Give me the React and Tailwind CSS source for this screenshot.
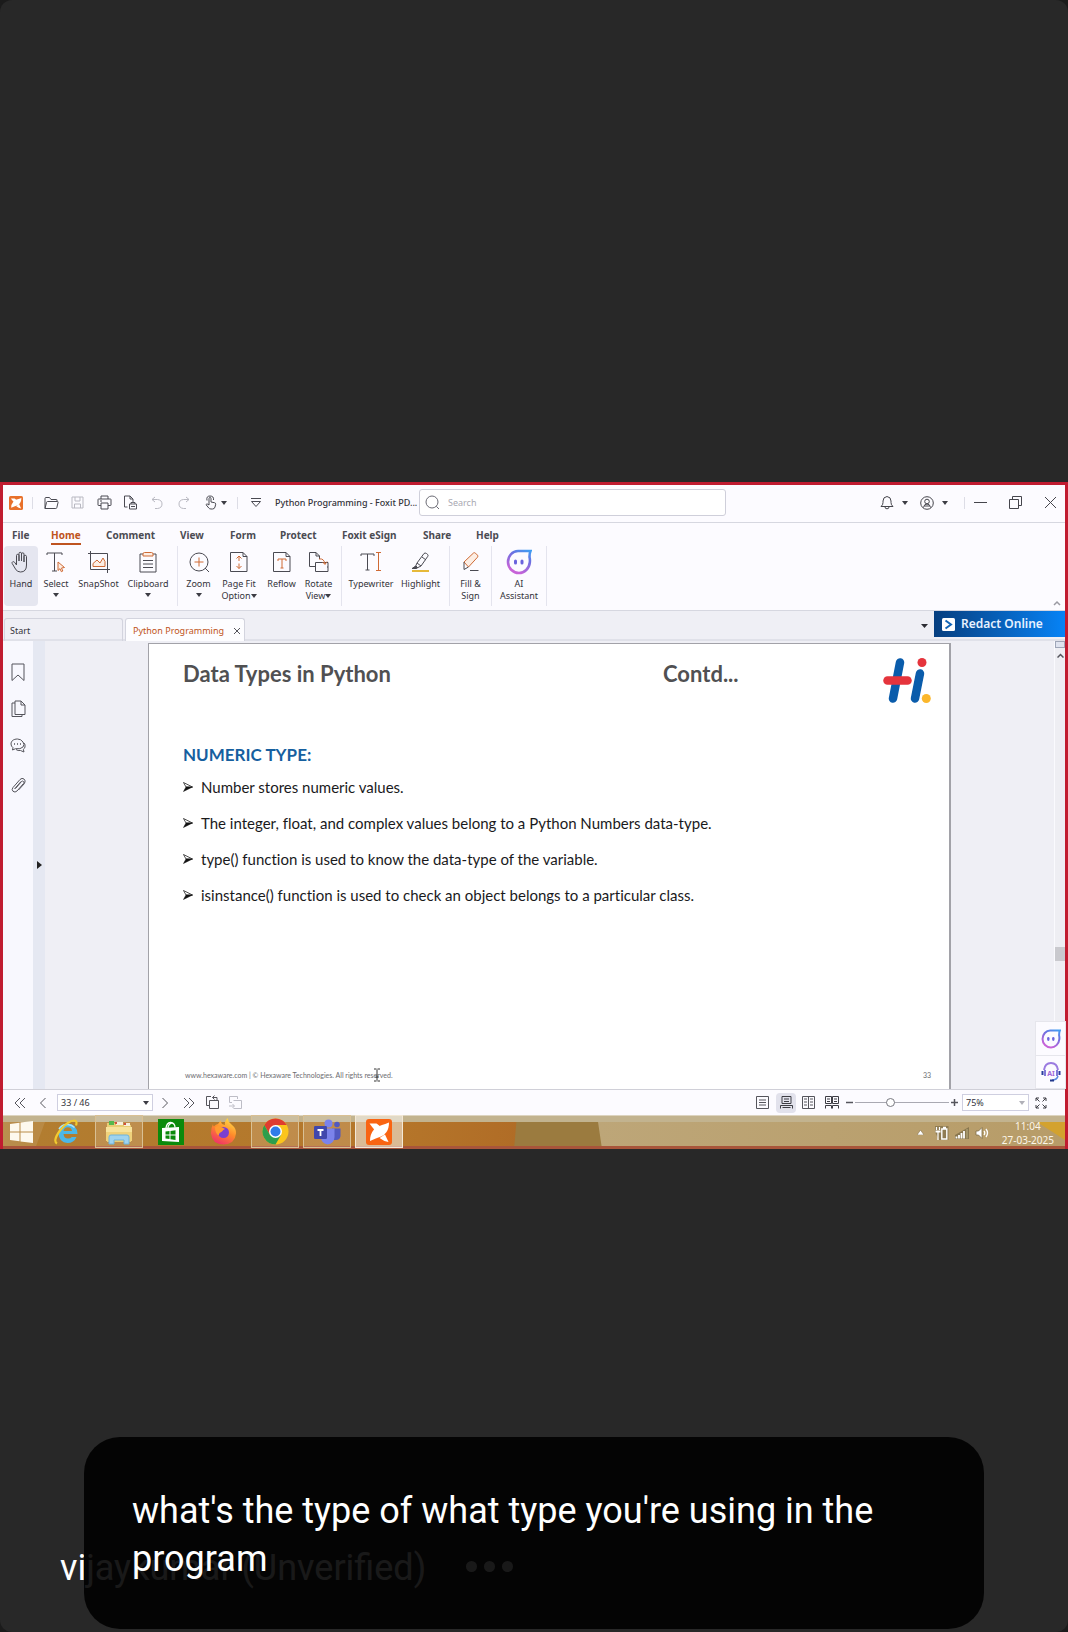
import React from "react";

function Svg({ w = 16, h, vb, className = "", children, sw = 1 }) {
  const hh = h || w;
  return (
    <svg
      width={w}
      height={hh}
      viewBox={vb || `0 0 ${w} ${hh}`}
      fill="none"
      stroke="currentColor"
      strokeWidth={sw}
      className={`shrink-0 ${className}`}
      aria-hidden="true"
    >
      {children}
    </svg>
  );
}

function Caret({ className = "text-[#3c3c44]" }) {
  return (
    <Svg w={6} h={4} className={className}>
      <path d="M0 0h6L3 4z" fill="currentColor" stroke="none" />
    </Svg>
  );
}

function FoxMark({ size, bg, fg }) {
  return (
    <Svg w={size} vb="0 0 26 26">
      <rect width="26" height="26" rx="3" fill={bg} stroke="none" />
      <path
        d="M4 22q0-7 4-11.500Q11 7 16 6q3-.8 7-2.500 0 6-2.500 9.500-2 3-5.500 4.500Q10 19 4 22zM3.500 4.500h7l3 2.300-5.300 3.600Q6 8 3.500 4.500zM13.500 19l5.500-3.500 3.500 7.500Q18 22.500 13.500 19z"
        fill={fg}
        stroke="none"
      />
    </Svg>
  );
}

function AiFace({ size }) {
  return (
    <Svg w={size} vb="0 0 26 26">
      <defs>
        <linearGradient id={`ai${size}`} x1="1" y1="0" x2="0.5" y2="1">
          <stop offset="0" stopColor="#3f9df2" />
          <stop offset="0.4" stopColor="#6d6fe0" />
          <stop offset="1" stopColor="#c763d8" />
        </linearGradient>
      </defs>
      <path
        d="M12 2h12.500c-1 2-1 3.500-1 6 .5 2 .5 4 .3 5.500C23.200 19.500 18.500 24 13 24 7 24 2 19 2 13S6.500 2 12 2z"
        stroke={`url(#ai${size})`}
        strokeWidth="2.600"
      />
      <rect x="8" y="10.500" width="3" height="5" rx="1.500" fill="#6a63dd" stroke="none" />
      <rect x="14.500" y="10.500" width="3" height="5" rx="1.500" fill="#6a63dd" stroke="none" />
    </Svg>
  );
}

const quick = [
  {
    label: "Open",
    cls: "w-[26px] text-[#4a4a52]",
    icon: (
      <Svg w={16} h={14}>
        <path d="M2 12.500V2.500q0-1 1-1h3.500L8 3.500h5.500q.5 0 .5.5v1.500M2 12.500l1.500-6q.2-1 1-1h10q.8 0 .6.8l-1.300 5.400q-.2.8-1 .8z" />
      </Svg>
    ),
  },
  {
    label: "Save",
    cls: "w-[27px] text-[#b9b9c2]",
    icon: (
      <Svg w={13}>
        <path d="M1 1h11v11H1zM4 1v4h5V1M3.500 12V8h6v4" />
      </Svg>
    ),
  },
  {
    label: "Print",
    cls: "w-[26px] text-[#4a4a52]",
    icon: (
      <Svg w={15}>
        <path d="M4 4V1h7v3M4 10.500H1.500q-.5 0-.5-.5V4.500q0-.5.5-.5h12q.5 0 .5.500V10q0 .5-.5.500H11M4 8h7v6H4zM3 6h2" />
      </Svg>
    ),
  },
  {
    label: "Print preview",
    cls: "w-[27px] text-[#4a4a52]",
    icon: (
      <Svg w={15}>
        <path d="M4.500 12H1.500V1H7l3 3v3M7 1v3h3M6.500 9h7v5h-7zM8 9V7.500h4V9M8 11.500h4" />
      </Svg>
    ),
  },
  {
    label: "Undo",
    cls: "w-[26px] text-[#b9b9c2]",
    icon: (
      <Svg w={12} h={14}>
        <path d="M4 1L1 3.500 4 6M1 3.500h5.500q4.500.5 4.500 4.500 0 4-4.500 4.500H4" />
      </Svg>
    ),
  },
  {
    label: "Redo",
    cls: "w-[27px] text-[#b9b9c2]",
    icon: (
      <Svg w={12} h={14}>
        <path d="M8 1l3 2.500L8 6M11 3.500H5.500Q1 4 1 8q0 4 4.500 4.500H8" />
      </Svg>
    ),
  },
];

function TitleBar() {
  return (
    <header className="flex h-[38px] items-center border-b border-[#d6d7e0] bg-[#fcfbff] pb-0.5 pl-1.5">
      <FoxMark size={14} bg="#e8702a" fg="#fff" />
      <span className="ml-[9px] mr-[5px] h-3 w-px bg-[#dddde6]" />
      {quick.map((q) => (
        <button key={q.label} aria-label={q.label} className={`flex h-6 items-center justify-center ${q.cls}`}>
          {q.icon}
        </button>
      ))}
      <button aria-label="Touch mode" className="flex h-6 w-9 items-center gap-1 pl-[7px] text-[#4a4a52]">
        <Svg w={13} h={15}>
          <path d="M5 9V3.500q0-1 1-1t1 1V7l3.500.7q1.300.3 1.200 1.500L11 12q-.5 2-2.500 2H7q-1.500 0-2.200-1L2 9.700q.7-1.200 1.800-.5L5 10zM3 5.500Q2 1 6 1t3.500 4" />
        </Svg>
        <Caret />
      </button>
      <span className="ml-1 mr-3 h-3 w-px bg-[#dddde6]" />
      <button aria-label="Customize toolbar" className="text-[#4a4a52]">
        <Svg w={12} h={10}>
          <path d="M1 .5h10M1.500 3.500h9L6 8.500z" />
        </Svg>
      </button>
      <span className="ml-[13px] w-36 whitespace-nowrap text-[9px] font-medium text-[#33333a]">Python Programming - Foxit PD...</span>
      <label className="flex h-[27px] w-[307px] items-center gap-2 rounded-[3px] border border-[#cfcfda] bg-white px-[5px] text-[#6c6c75]">
        <Svg w={15}>
          <circle cx="7" cy="7" r="6" />
          <path d="M11.300 11.300l2.700 2.700" />
        </Svg>
        <input aria-label="Search" placeholder="Search" className="min-w-0 flex-1 bg-transparent text-[9px] outline-none placeholder:text-[#a9a9b2]" />
      </label>
      <div className="ml-auto flex items-center text-[#45454c]">
        <button aria-label="Notifications" className="flex w-10 items-center gap-2">
          <Svg w={14} h={15}>
            <path d="M1 11.500h12q-2-1.500-2-4V6q0-4-4-4.500Q3 2 3 6v1.500q0 2.500-2 4zM5 12q0 1.800 2 1.800T9 12" />
          </Svg>
          <Caret />
        </button>
        <button aria-label="Account" className="flex w-11 items-center gap-2">
          <Svg w={14}>
            <circle cx="7" cy="7" r="6.300" />
            <circle cx="7" cy="5.500" r="2.300" />
            <path d="M3.500 11.500Q4 8 7 8t3.500 3.500M4.500 10h5" />
          </Svg>
          <Caret />
        </button>
        <span className="mr-2 h-3 w-px bg-[#dddde6]" />
        <button aria-label="Minimize" className="w-[35px]">
          <Svg w={14}>
            <path d="M1 6.500h13" />
          </Svg>
        </button>
        <button aria-label="Restore" className="w-[36px]">
          <Svg w={15}>
            <path d="M1.500 4.500h9v9h-9zM4.500 4.500v-3h9v9h-3" />
          </Svg>
        </button>
        <button aria-label="Close" className="w-[21px]">
          <Svg w={13}>
            <path d="M1 1l11 11M12 1L1 12" />
          </Svg>
        </button>
      </div>
    </header>
  );
}

const menus = [
  ["File", "w-[39px]"],
  ["Home", "w-[55px]"],
  ["Comment", "w-[74px]"],
  ["View", "w-[50px]"],
  ["Form", "w-[50px]"],
  ["Protect", "w-[62px]"],
  ["Foxit eSign", "w-[81px]"],
  ["Share", "w-[53px]"],
  ["Help", "w-[40px]"],
];

const O = "#cf6a35";

const groups = [
  [
    {
      l1: "Hand",
      w: "w-[34px] bg-[#e5e6f0] rounded-sm",
      icon: (
        <path d="M6.500 14V4.500q0-1.200 1.200-1.200T9 4.500V10V2.500q0-1.200 1.200-1.200t1.300 1.200V10V3q0-1.200 1.200-1.200T14 3v8V5.500q0-1.200 1.200-1.200t1.300 1.200V14q0 7-6 7-3.500 0-5-3L2.200 12.500q-.5-1.200.5-1.700t2 .6L6.500 14" />
      ),
    },
    {
      l1: "Select",
      w: "w-[36px]",
      caret: true,
      icon: (
        <>
          <path d="M2 4V2h15v2M9.500 2v18M7 20h5" />
          <path d="M13 11l6.500 5.500-3 .5 1.300 3-1.500.7-1.300-3-2 1.800z" stroke={O} fill="#fdeee4" />
        </>
      ),
    },
    {
      l1: "SnapShot",
      w: "w-[49px]",
      icon: (
        <>
          <path d="M0 2.500h19.500V22M2.500 0v18.500H22" />
          <path d="M5 15.500v-3l4-3.500 3 3 3-5 2 3.500v5z" stroke={O} fill="#fdeee4" />
        </>
      ),
    },
    {
      l1: "Clipboard",
      w: "w-[50px]",
      caret: true,
      icon: (
        <>
          <path d="M6 3H3v18h16V3h-3M6 9.500h10M6 13h10M6 16.500h10" />
          <path d="M6 5V3q0-1.500 1.500-1.500h7Q16 1.500 16 3v2z" stroke={O} fill="#fdeee4" />
        </>
      ),
    },
  ],
  [
    {
      l1: "Zoom",
      w: "w-[33px]",
      caret: true,
      icon: (
        <>
          <path d="M17 17l4 4" />
          <circle cx="11" cy="11" r="9" />
          <path d="M11 6.500v9M6.500 11h9" stroke={O} />
        </>
      ),
    },
    {
      l1: "Page Fit",
      l2: "Option",
      w: "w-[48px]",
      icon: (
        <>
          <path d="M2.500 1.500H15l4 4v15H2.500zM15 1.500v4h4" />
          <path d="M11 5v5M11 12.500v5M8.500 7.500L11 5l2.500 2.500M8.500 15l2.500 2.500 2.500-2.500" stroke={O} />
        </>
      ),
    },
    {
      l1: "Reflow",
      w: "w-[37px]",
      icon: (
        <>
          <path d="M2.500 1.500H15l4 4v15H2.500zM15 1.500v4h4" />
          <path d="M7 10V8h8v2M11 8v9M9.500 17h3" stroke={O} />
        </>
      ),
    },
    {
      l1: "Rotate",
      l2: "View",
      w: "w-[37px]",
      icon: (
        <>
          <path d="M7 15.500H1.500v-14H8l3.500 3.500v3M8 1.500V5h3.500M7.500 20.500v-9H20v9zM20 16h-1" />
          <path d="M11 8q5-1 6 5M14.500 11l2.500 2.500 2-3" stroke={O} />
        </>
      ),
    },
  ],
  [
    {
      l1: "Typewriter",
      w: "w-[50px]",
      icon: (
        <>
          <path d="M1 5V3h13v2M7.500 3v16M5.500 19h4" />
          <path d="M16 1.500h5M18.500 1.500v18M16 19.500h5" stroke={O} />
        </>
      ),
    },
    {
      l1: "Highlight",
      w: "w-[49px]",
      icon: (
        <>
          <path d="M7 12l7-9.500q1-1 2.500 0l1 .8q1 1 .3 2L11 15zM7 12l-1.500 3.500L2 17.500h4l2-1L11 15M12 6l4 3" />
          <path d="M3 17l3-2 1.500 1.500-2 1z" fill="#4a4a52" />
          <path d="M2 20h17" stroke="#e6b93a" strokeWidth="2" />
        </>
      ),
    },
  ],
  [
    {
      l1: "Fill &",
      l2: "Sign",
      plain: true,
      w: "w-[33px]",
      icon: (
        <>
          <path d="M4 11L13.500 2q1-.7 2 .2l2 2q.8 1 0 2L8.500 16z" stroke={O} fill="#fdeee4" />
          <path d="M4 11v7.500L8.500 16M10 19.500h8.500" />
        </>
      ),
    },
  ],
  [{ l1: "AI", l2: "Assistant", plain: true, w: "w-[46px]", ai: true }],
];

function Tool({ t }) {
  return (
    <button className={`flex h-[60px] flex-col items-center pt-[3px] text-[9px] leading-3 text-[#33333a] ${t.w}`}>
      <span className="flex h-[26px] items-center text-[#4a4a52]">
        {t.ai ? <AiFace size={26} /> : <Svg w={22}>{t.icon}</Svg>}
      </span>
      <span className="mt-[3px] whitespace-nowrap">{t.l1}</span>
      {t.l2 && (
        <span className="flex items-center whitespace-nowrap">
          {t.l2}
          {!t.plain && <Caret />}
        </span>
      )}
      {t.caret && (
        <span className="mt-[3px]">
          <Caret />
        </span>
      )}
    </button>
  );
}

function Ribbon() {
  return (
    <div className="flex flex-col bg-[#fcfbff]">
      <nav className="flex h-[23px] items-end pb-px pl-[9px]">
        {menus.map(([m, w]) => (
          <a
            key={m}
            href="#ribbon"
            className={`flex text-[10px] font-bold leading-4 ${w} ${m === "Home" ? "text-[#bf5420]" : "text-[#4b4b52]"}`}
          >
            <span className={m === "Home" ? "whitespace-nowrap border-b-2 border-[#bf5420]" : "whitespace-nowrap border-b-2 border-transparent"}>{m}</span>
          </a>
        ))}
      </nav>
      <div id="ribbon" className="flex items-start border-b border-[#d6d7e0] pb-1 pl-px">
        {groups.map((g, i) => (
          <div key={i} className="mr-1 flex border-r border-[#e4e4ee] pr-1">
            {g.map((t) => (
              <Tool key={t.l1} t={t} />
            ))}
          </div>
        ))}
        <button aria-label="Collapse ribbon" className="ml-auto mr-1 self-end text-[#9a9aa2]">
          <Svg w={8} h={6} sw={1.5}>
            <path d="M1 5l3-3 3 3" />
          </Svg>
        </button>
      </div>
    </div>
  );
}

function TabStrip() {
  return (
    <div className="flex h-[30px] items-start border-b-2 border-[#e0e1e9] bg-[#efeff5] pl-px">
      <button className="mt-[7px] h-[23px] w-[119px] rounded-t-[3px] border border-b-0 border-[#d3d4de] pl-[5px] pt-px text-left text-[9px] text-[#33333a]">Start</button>
      <div className="ml-0.5 mt-[7px] flex h-[23px] w-[120px] items-center rounded-t-[3px] border border-b-0 border-[#d3d4de] bg-[#fdfdff] pl-[7px] pt-px">
        <button className="whitespace-nowrap text-[9px] text-[#bf5420]">Python Programming</button>
        <button aria-label="Close tab" className="ml-auto mr-[3px] text-[#55555c]">
          <Svg w={8}>
            <path d="M1 1l6 6M7 1L1 7" />
          </Svg>
        </button>
      </div>
      <button aria-label="Tab list" className="ml-auto mr-1.5 flex h-[30px] items-center">
        <Svg w={7} h={4} className="text-[#2c2c33]">
          <path d="M0 0h7L3.500 4z" fill="currentColor" stroke="none" />
        </Svg>
      </button>
      <button className="flex h-[26px] w-[131px] items-center gap-1.5 bg-linear-to-r from-[#063f80] to-[#0683f6] pl-2 text-xs font-semibold text-[#e6f1ff]">
        <Svg w={13}>
          <rect width="13" height="13" rx="1.500" fill="#fff" stroke="none" />
          <path d="M3.500 2.500l5.500 4-5.500 4" stroke="#1266b8" strokeWidth="2" />
        </Svg>
        <span className="whitespace-nowrap">Redact Online</span>
      </button>
    </div>
  );
}

const bullets = [
  "Number stores numeric values.",
  "The integer, float, and complex values belong to a Python Numbers data-type.",
  "type() function is used to know the data-type of the variable.",
  "isinstance() function is used to check an object belongs to a particular class.",
];

function Slide() {
  return (
    <article className="relative mx-[103px] mt-0.5 flex flex-1 flex-col border-l border-r-2 border-t border-[#a2a2a8] bg-white pl-[34px] pr-[18px] pt-[14px] font-['Lato',sans-serif] [font-variant-ligatures:none]">
      <div className="flex h-12">
        <h1 className="w-[480px] text-[22px] font-bold leading-8 text-[#505052]">Data Types in Python</h1>
        <p className="text-[22px] font-bold leading-8 text-[#505052]">Contd...</p>
        <Svg w={48} h={46} className="ml-auto">
          <g strokeLinecap="round" strokeWidth="8.500">
            <path d="M17 4.500L10 40.500" stroke="#0a5cab" />
            <path d="M37 15.500L32 40.500" stroke="#0a5cab" />
            <path d="M4.500 22.500h20" stroke="#e5343c" />
          </g>
          <circle cx="39" cy="4.500" r="4.500" fill="#e5343c" stroke="none" />
          <circle cx="43.300" cy="40.500" r="4.500" fill="#fbb72c" stroke="none" />
        </Svg>
      </div>
      <h2 className="mt-[37px] text-[17px] font-bold leading-6 text-[#165f9f]">NUMERIC TYPE:</h2>
      <ul className="mt-0.5 text-[15px] leading-9 text-[#1a1a1c]">
        {bullets.map((b) => (
          <li key={b} className="flex items-center gap-2">
            <Svg w={10}>
              <path d="M.5.5L9.500 5H3z" stroke="#222" strokeWidth=".8" fill="#fff" />
              <path d="M3 5h6.500L.5 9.500z" fill="#111" stroke="#111" strokeWidth=".5" />
            </Svg>
            {b}
          </li>
        ))}
      </ul>
      <footer className="mt-auto flex justify-between pb-2 pl-0.5 text-[7px] leading-3 text-[#6c6c70]">
        <span>www.hexaware.com | © Hexaware Technologies. All rights reserved.</span>
        <span>33</span>
      </footer>
      <div className="absolute bottom-[7px] left-[224px]">
        <Svg w={8} h={14} className="text-[#333]">
          <path d="M1 1h2.500M4.500 1H7M4 1.500v11M1 13h2.500M4.500 13H7M2.500 9h3" />
        </Svg>
      </div>
    </article>
  );
}

function Workspace() {
  return (
    <main className="flex flex-1 bg-[#efeff5]">
      <aside className="flex w-[30px] flex-col items-center bg-[#f8f8fe] pt-[22px] text-[#55555c]">
        <button aria-label="Bookmarks" className="flex h-[37px] items-start">
          <Svg w={14} h={19}>
            <path d="M1 1h12v16.500L7 12l-6 5.500z" />
          </Svg>
        </button>
        <button aria-label="Pages" className="flex h-[38px] items-start">
          <Svg w={15} h={18}>
            <path d="M4 1h6l4 4v9.500H4zM10 1v4h4M4 3H1v13.500h10v-2" />
          </Svg>
        </button>
        <button aria-label="Comments" className="flex h-[39px] items-start">
          <Svg w={16}>
            <path d="M7.500 1C3.500 1 1 3 1 6q0 2.300 2 3.700L2.500 12l3-1.300q5 .8 7.500-1.700 2-2.500 0-5Q11 1 7.500 1zM14 5q1.500 1.500 1 4-.3 1.500-1.700 2.300L14 14l-3.500-1.500Q8 13 6 11.500" />
            <path d="M4 6h1M7 6h1M10 6h1" strokeWidth="1.300" />
          </Svg>
        </button>
        <button aria-label="Attachments" className="flex items-start">
          <Svg w={15} h={17}>
            <path d="M4.500 11.500l6-7q1.200-1 2 0 .8.8 0 2L6 14q-2 2-4 .3-1.700-1.800 0-3.800L9 2.500Q11 .5 13 2t.5 4.500L7.500 13M3.500 12L10 4.500" />
          </Svg>
        </button>
      </aside>
      <button aria-label="Show navigation panel" className="flex w-3 items-center justify-center bg-[#e5e8f2]">
        <Svg w={5} h={8} className="text-[#222]">
          <path d="M0 0v8l5-4z" fill="currentColor" stroke="none" />
        </Svg>
      </button>
      <section className="relative flex flex-1 flex-col">
        <Slide />
        <div className="absolute -right-3 bottom-0 z-10 flex w-[31px] flex-col gap-px border border-[#e6e6ec] bg-[#e6e6ec]">
          <button aria-label="AI Assistant panel" className="flex h-[33px] items-center justify-center bg-[#fcfbff]">
            <AiFace size={20} />
          </button>
          <button aria-label="AI support" className="flex h-8 items-center justify-center bg-[#fcfbff]">
            <svg width="20" height="20" viewBox="0 0 20 20" fill="none" aria-hidden="true">
              <path d="M3 8Q4 1 10 1t7 7" stroke="#9b7be0" strokeWidth="2" />
              <path d="M4 8v6M16 8v6" stroke="#7f7ad8" strokeWidth="2" />
              <path d="M1.500 9v4M18.500 9v4" stroke="#2d3f9e" strokeWidth="2" />
              <path d="M17 14q-1 4-6 4" stroke="#5a8be0" strokeWidth="1.500" />
              <path d="M9 18.500h4" stroke="#23388c" strokeWidth="2" />
              <text x="10" y="14" textAnchor="middle" fontSize="7" fontWeight="700" fill="#a066d8">AI</text>
            </svg>
          </button>
        </div>
      </section>
      <div className="flex w-[11px] flex-col items-center border-l border-[#fafafe] bg-[#eeeef3] text-[#55555c]">
        <span className="h-[7px] w-full border border-[#9fa6b8] bg-[#dfe3ef]" />
        <Svg w={7} h={5} sw={1.5} className="mt-[5px]">
          <path d="M.5 4.500l3-3 3 3" />
        </Svg>
        <span className="mt-[289px] h-[14px] w-full bg-[#c9c9ce]" />
      </div>
    </main>
  );
}

function StatusBar() {
  return (
    <div className="flex h-[26px] items-center border-t border-[#d0d0d8] bg-[#fcfbff] text-[#55555c]">
      <button aria-label="First page" className="ml-[11px] w-[25px]">
        <Svg w={12}>
          <path d="M6 1L1 6l5 5M11 1L6 6l5 5" />
        </Svg>
      </button>
      <button aria-label="Previous page" className="w-[18px]">
        <Svg w={8} h={12}>
          <path d="M6.500 1l-5 5 5 5" />
        </Svg>
      </button>
      <label className="relative flex items-center">
        <select aria-label="Page" className="h-[17px] w-24 appearance-none border border-[#cfcfe0] bg-white pl-[3px] text-[9px] leading-3 text-[#33333a]">
          <option>33 / 46</option>
        </select>
        <span className="pointer-events-none absolute right-1">
          <Caret />
        </span>
      </label>
      <button aria-label="Next page" className="ml-2 w-[22px]">
        <Svg w={8} h={12}>
          <path d="M1.500 1l5 5-5 5" />
        </Svg>
      </button>
      <button aria-label="Last page" className="w-[22px]">
        <Svg w={12}>
          <path d="M1 1l5 5-5 5M6 1l5 5-5 5" />
        </Svg>
      </button>
      <button aria-label="Previous view" className="w-[23px]">
        <Svg w={15}>
          <path d="M4.500 5.500h9v8h-9M4.500 5.500v8M4 10.500H1.500v-9H6M12 5V2.500H7.500M9.500.5l-2 2 2 2" />
        </Svg>
      </button>
      <button aria-label="Next view" className="text-[#bdbdc6]">
        <Svg w={15}>
          <path d="M5.500 5.500h8v8h-8M4 7.500H1.500v-6h8V4M1 11h5M4.500 9l2 2-2 2" />
        </Svg>
      </button>
      <div className="ml-auto flex items-center">
        <button aria-label="Single page" className="mr-[7px]">
          <Svg w={13}>
            <path d="M.5.5h12v12H.5zM3 4h7M3 6.500h7M3 9h7" />
          </Svg>
        </button>
        <button aria-label="Continuous" className="mr-1.5 flex h-5 w-5 items-center justify-center rounded bg-[#e2e2ec] text-[#3d3d44]">
          <Svg w={13}>
            <path d="M2 .5h9v7H2zM4 3h5M4 5.500h5M.5 12.500v-3h12v3M2.500 11.500h8" />
          </Svg>
        </button>
        <button aria-label="Facing" className="mr-[10px]">
          <Svg w={13}>
            <path d="M.5.5h12v12H.5zM6.500 0v13M2 3h3M2 6h3M2 9h3M8 3h3M8 6h3M8 9h3" />
          </Svg>
        </button>
        <button aria-label="Continuous facing" className="mr-[7px] text-[#3d3d44]">
          <Svg w={14} h={13}>
            <path d="M.5.500h6v7h-6zM7.500.5h6v7h-6zM2 3h3M2 5.500h3M9 3h3M9 5.500h3M.5 12.500v-3h6v3M7.500 12.500v-3h6v3" />
          </Svg>
        </button>
        <button aria-label="Zoom out">
          <Svg w={7} sw={1.5}>
            <path d="M0 3.500h7" />
          </Svg>
        </button>
        <input
          type="range"
          aria-label="Zoom"
          min="0"
          max="100"
          defaultValue="37"
          className="mx-0.5 h-px w-[94px] appearance-none bg-[#a9a9b2] [&::-webkit-slider-thumb]:h-[9px] [&::-webkit-slider-thumb]:w-[9px] [&::-webkit-slider-thumb]:appearance-none [&::-webkit-slider-thumb]:rounded-full [&::-webkit-slider-thumb]:border [&::-webkit-slider-thumb]:border-[#77777f] [&::-webkit-slider-thumb]:bg-white"
        />
        <button aria-label="Zoom in">
          <Svg w={7} sw={1.5}>
            <path d="M0 3.500h7M3.500 0v7" />
          </Svg>
        </button>
        <label className="relative ml-1 flex items-center">
          <select aria-label="Zoom level" className="h-[17px] w-[67px] appearance-none border border-[#cfcfe0] bg-white pl-[3px] text-[9px] leading-3 text-[#33333a]">
            <option>75%</option>
          </select>
          <span className="pointer-events-none absolute right-1">
            <Caret className="text-[#b0b0b8]" />
          </span>
        </label>
        <button aria-label="Full screen" className="ml-1.5 mr-[18px] text-[#3d3d44]">
          <Svg w={12}>
            <path d="M1 4V1h3M8 1h3v3M11 8v3H8M4 11H1V8M1 1l3.500 3.500M11 1L7.500 4.500M11 11L7.500 7.500M1 11l3.500-3.500" />
          </Svg>
        </button>
      </div>
    </div>
  );
}

const apps = [
  {
    label: "Internet Explorer",
    icon: (
      <svg width="26" height="26" viewBox="0 0 26 26" fill="none" aria-hidden="true">
        <path d="M22.500 18Q20 24 13.500 24 5 23.500 4.500 14.500 5 5 13.500 4.500 23 5 23.500 15H9.500q.5 4.500 4.500 4.500 2.500 0 3.800-1.500z" fill="#4cb8e8" />
        <path d="M9.500 12h8.500q-.5-3.500-4-3.800Q10 8.500 9.500 12z" fill="#b7812f" />
        <path d="M5 10Q8 5 14 5.500q4 .5 6.500 3" stroke="#a8e4fa" strokeWidth="1.500" />
        <path d="M3 24.500Q-1.500 22 6 11.500 14 1.500 20.500 1.500q3 .5 1.500 5" stroke="#f2cb30" strokeWidth="2.200" />
      </svg>
    ),
  },
  {
    label: "File Explorer",
    open: true,
    icon: (
      <svg width="28" height="26" viewBox="0 0 28 26" aria-hidden="true">
        <path d="M2 4h8l1 2h15v17H2z" fill="#e9cd74" />
        <path d="M4 2h5v4H4z" fill="#54b84e" />
        <path d="M11 3h7v3h-7zM19 4h6v3h-6z" fill="#f6f0dc" />
        <path d="M10 3h2v2h-2zM19 4h2v2h-2z" fill="#d34f3a" />
        <path d="M1 8h26v14H1z" fill="#f7e39c" />
        <path d="M1 13h26v9H1z" fill="#efd27c" />
        <path d="M4 25v-7q0-2 2-2h16q2 0 2 2v7h-5v-4H9v4z" fill="#9fd3ef" stroke="#6fb4dc" />
      </svg>
    ),
  },
  {
    label: "Store",
    icon: (
      <svg width="26" height="26" viewBox="0 0 26 26" aria-hidden="true">
        <path d="M0 0h26v26H0z" fill="#0c8a0c" />
        <path d="M4 9l17-1v15L4 22z" fill="#fff" />
        <path d="M8 9q.5-5 4.500-5.500Q17 4 17 8.500M10 9q0-3.500 4-5" fill="none" stroke="#fff" strokeWidth="1.300" />
        <path d="M7.500 12.500l4-.5v3.500h-4zM12.500 12l5-.7v4.200h-5zM7.500 16.500h4V20l-4-.5zM12.500 16.500h5V21l-5-.8z" fill="#0c8a0c" />
      </svg>
    ),
  },
  {
    label: "Firefox",
    icon: (
      <svg width="27" height="27" viewBox="0 0 27 27" aria-hidden="true">
        <defs>
          <linearGradient id="ff" x1=".8" y1="0" x2=".3" y2="1">
            <stop offset="0" stopColor="#ffe14a" />
            <stop offset=".5" stopColor="#ff8a2a" />
            <stop offset="1" stopColor="#f0306a" />
          </linearGradient>
        </defs>
        <path d="M3 6q0 1.500.8 2.500Q6 6 8 6q2-3 3-3.500 0 2 1 3.500l3 1q-1-3 2.500-7 .8 4 4 6.500 5 4 4.500 9-1 10.500-12.500 11Q2 26 1 15.500.8 10 3 6z" fill="url(#ff)" />
        <circle cx="13.500" cy="14.500" r="5.500" fill="#7a3fd0" />
        <path d="M5 9q4-2 7 .5 2 .5 3 1.500-2 .5-3 2.500-3 1-3.500 4Q5 15 5 9z" fill="#ff9a30" />
      </svg>
    ),
  },
  {
    label: "Chrome",
    open: true,
    icon: (
      <svg width="27" height="27" viewBox="0 0 27 27" aria-hidden="true">
        <circle cx="13.500" cy="13.500" r="13" fill="#fbc51c" />
        <path d="M2.240 7A13 13 0 0 1 24.760 7H13.500L7.900 16.700z" fill="#df3c30" />
        <path d="M2.240 7A13 13 0 0 0 13.500 26.500L19 17 13.500 13.500 7.900 16.700z" fill="#2e9e4c" />
        <circle cx="13.500" cy="13.500" r="6.500" fill="#fff" />
        <circle cx="13.500" cy="13.500" r="5" fill="#2f7be8" />
      </svg>
    ),
  },
  {
    label: "Teams",
    open: true,
    icon: (
      <svg width="28" height="26" viewBox="0 0 28 26" aria-hidden="true">
        <circle cx="24" cy="5.500" r="2.800" fill="#5159c0" />
        <circle cx="15.500" cy="4.500" r="4" fill="#7b83eb" />
        <path d="M19 9.500h8.500V17q-.5 4-4.500 4h-3z" fill="#5159c0" />
        <path d="M8 9.500h13.500V18q-.5 7-7 7.500Q8 24 8 18z" fill="#7b83eb" />
        <rect x="1" y="7" width="13" height="13" rx="1.200" fill="#4047ac" />
        <path d="M4.500 11h6M7.500 11v6" stroke="#fff" strokeWidth="1.800" />
      </svg>
    ),
  },
  { label: "Foxit", active: true, icon: <FoxMark size={26} bg="#f96412" fg="#fff" /> },
];

function Taskbar() {
  return (
    <div className="relative flex h-[34px] overflow-hidden">
      <svg className="absolute inset-0 h-full w-full" viewBox="0 0 1062 34" preserveAspectRatio="none" aria-hidden="true">
        <defs>
          <linearGradient id="wall">
            <stop offset="0" stopColor="#b1833b" />
            <stop offset=".06" stopColor="#b27d30" />
            <stop offset=".75" stopColor="#b5762a" />
            <stop offset="1" stopColor="#b06c26" />
          </linearGradient>
          <linearGradient id="sand">
            <stop offset="0" stopColor="#bda678" />
            <stop offset="1" stopColor="#b79c68" />
          </linearGradient>
        </defs>
        <path d="M0 0h520v34H0z" fill="url(#wall)" />
        <path d="M0 7h42L32 34H0z" fill="#ffffff" opacity=".1" />
        <path d="M514 0h90v34h-93z" fill="#9b7b3f" />
        <path d="M594 0h468v34H599z" fill="url(#sand)" />
        <path d="M1034 7h28v18z" fill="#d3a22e" />
        <path d="M0 0h1062v7H0z" fill="#c2b38f" />
        <path d="M0 0h1062v1H0z" fill="#ddd4c0" />
        <path d="M0 31h1062v3H0z" fill="#a8553a" />
      </svg>
      <div className="relative flex gap-1">
        <button aria-label="Windows Start" className="flex h-[33px] w-9 items-center justify-center">
          <svg width="23" height="22" viewBox="0 0 23 22" fill="#fdf9ee" aria-hidden="true">
            <path d="M0 3l9.500-1.300v8.800H0zM10.500 1.500L23 0v10.500H10.500zM0 11.500h9.500v8.800L0 19zM10.500 11.500H23V22l-12.500-1.500z" />
          </svg>
        </button>
        {apps.map((a) => (
          <button
            key={a.label}
            aria-label={a.label}
            className={`flex h-[33px] w-12 items-center justify-center ${
              a.active ? "border border-[#f3e8d6] bg-white/50" : a.open ? "border border-[#d9c094] bg-white/15" : ""
            }`}
          >
            {a.icon}
          </button>
        ))}
      </div>
      <div className="relative ml-auto flex items-center pt-px text-white">
        <Svg w={7} h={5} className="mr-[11px]">
          <path d="M0 5h7L3.500 0z" fill="#fff" stroke="#77643f" strokeWidth=".5" />
        </Svg>
        <Svg w={14} className="mr-1.5">
          <path d="M0 0h13.500v14H4L0 6z" fill="#7d6d48" stroke="none" opacity=".7" />
          <path d="M6.800 3h5v10h-5zM8 1.500h3" stroke="#fff" strokeWidth="1.400" />
          <path d="M1.500 1v3M4.500 1v3M.5 5h5M.5 6h5M3 6v8" stroke="#fff" strokeWidth="1.200" />
        </Svg>
        <Svg w={14} h={12} className="mr-1.5">
          <path d="M0 12V8L14 0v12z" fill="#7d6d48" stroke="none" opacity=".8" />
          <path d="M1.500 11.500V9.500M4 11.500V8M6.500 11.500V6M9 11.500V4" stroke="#fff" strokeWidth="1.800" />
          <path d="M12 11.500V2" stroke="#a39468" strokeWidth="2" />
        </Svg>
        <Svg w={14} className="mr-[13px]">
          <path d="M1 5h2.500L7 1.500v11L3.500 9H1z" fill="#fff" stroke="#7d6d48" strokeWidth=".8" />
          <path d="M9 5q1.500 2 0 4M11 3q3 4 0 8" stroke="#fff" strokeWidth="1.300" />
        </Svg>
        <div className="mr-[11px] text-center text-[10px] leading-[14px] text-[#fdf6e8]">
          <p>11:04</p>
          <p>27-03-2025</p>
        </div>
      </div>
    </div>
  );
}

export default function App() {
  return (
    <div className="bg-[#1b1b1b]">
      <div className="relative flex min-h-screen flex-col justify-center rounded-xl bg-[#282828] pb-px">
        <div className="flex min-h-[667px] flex-col border-x-[3px] border-t-[3px] border-[#c01c30] font-['Noto_Sans',sans-serif]">
          <TitleBar />
          <Ribbon />
          <TabStrip />
          <Workspace />
          <StatusBar />
          <Taskbar />
        </div>
        <div className="absolute bottom-10 left-[60px] flex items-center gap-10 font-['Roboto',sans-serif] text-4xl leading-12 text-white">
          <span>vijaykumar (Unverified)</span>
          <span className="flex gap-[7px] pb-1">
            <span className="h-[11px] w-[11px] rounded-full bg-white" />
            <span className="h-[11px] w-[11px] rounded-full bg-white" />
            <span className="h-[11px] w-[11px] rounded-full bg-white" />
          </span>
        </div>
        <div className="absolute inset-x-[84px] bottom-[3px] rounded-[36px] bg-black/90 px-12 pb-[46px] pt-[50px] font-['Roboto',sans-serif] text-4xl leading-12 text-white">
          what's the type of what type you're using in the program
        </div>
      </div>
    </div>
  );
}
